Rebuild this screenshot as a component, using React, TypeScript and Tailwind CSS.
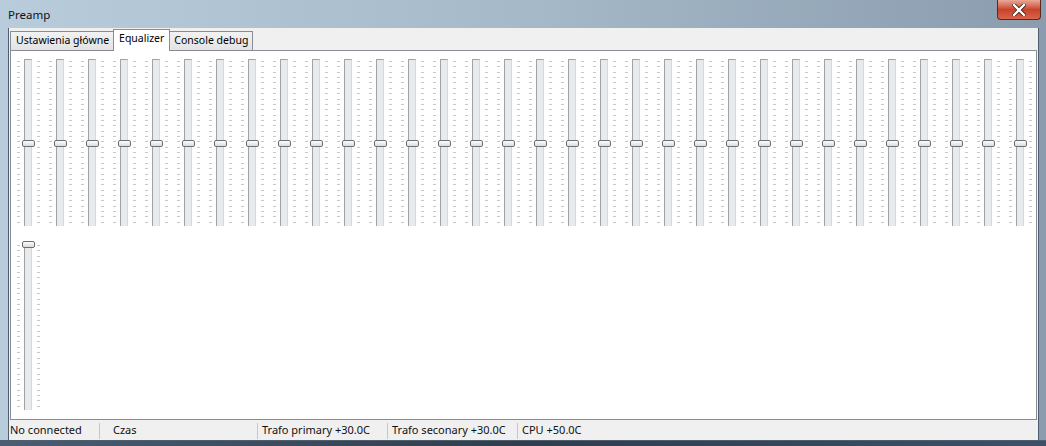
import React from 'react';

const TICKS = Array.from({ length: 31 });
const BANDS = Array.from({ length: 32 });

const TickColumn = () => (
  <div className="flex flex-col justify-between h-[162px] w-[3px] mt-[2px]">
    {TICKS.map((_, i) => (
      <div key={i} className="h-px w-[3px] bg-[#c9c9c9]" />
    ))}
  </div>
);

// one vertical trackbar, thumb position in px from the top of the track
const Slider = ({ thumbTop }: { thumbTop: number }) => (
  <div className="relative w-[32px] h-[167px] flex">
    <div className="ml-[5px]">
      <TickColumn />
    </div>
    <div className="ml-[4px] w-[8px] h-[167px] border-l border-t border-r border-[#a2a2a2] border-r-[#d8d8d8] bg-[#e8ebed]" />
    <div className="ml-[5px]">
      <TickColumn />
    </div>
    <div
      className="absolute left-[10px] w-[13px] h-[7px] rounded-[2px] border border-[#6e6e6e] bg-gradient-to-b from-[#fcfcfc] to-[#dcdcdc]"
      style={{ top: thumbTop }}
    />
  </div>
);

const StatusCell = ({ text, width, pad, last }: { text: string; width: string; pad: string; last?: boolean }) => (
  <div className={`${width} ${pad} h-[16px] flex items-center ${last ? '' : 'border-r border-[#c6c6c6]'}`}>
    <span>{text}</span>
  </div>
);

export default function App() {
  return (
    <div
      className="w-[1046px] h-[446px] flex flex-col bg-gradient-to-r from-[#b9ccdc] via-[#a6b9c9] to-[#8a9cad] text-black overflow-hidden"
      style={{ fontFamily: '"Noto Sans", "Liberation Sans", sans-serif' }}
    >
      {/* Title bar */}
      <div className="h-[28px] flex items-start justify-between">
        <div className="pl-[8px] pt-[7px] leading-[16px] text-[11.5px] text-[#111]">Preamp</div>
        <div className="mr-[5px] w-[44px] h-[20px] rounded-b-[4px] border border-t-0 border-[#5a2a22] bg-gradient-to-b from-[#e8a898] via-[#c9432c] to-[#d8644c] flex items-center justify-center">
          <svg width="14" height="12" viewBox="0 0 14 12">
            <path d="M2 1 L12 11 M12 1 L2 11" stroke="#3a1a14" strokeWidth="4" strokeLinecap="square" />
            <path d="M2 1 L12 11 M12 1 L2 11" stroke="#ffffff" strokeWidth="2.4" strokeLinecap="square" />
          </svg>
        </div>
      </div>

      {/* Client area */}
      <div className="flex-1 flex px-[8px]">
        <div className="flex-1 flex flex-col bg-[#f0f0f0] border-l border-r border-[#4f5e6e]">
          {/* Tabs */}
          <div className="h-[22px] flex items-end pl-[1px] relative z-10 text-[10.5px]">
            <div className="h-[19px] pl-[5px] pr-[4px] flex items-center border border-b-0 border-[#898c95] bg-gradient-to-b from-[#f2f2f2] to-[#e3e3e3]">
              Ustawienia główne
            </div>
            <div className="h-[22px] px-[5px] -mb-px pb-[4px] flex items-center bg-white border border-b-0 border-[#898c95] -ml-px">
              Equalizer
            </div>
            <div className="h-[19px] px-[4px] flex items-center border border-b-0 border-[#898c95] bg-gradient-to-b from-[#f2f2f2] to-[#e3e3e3] -ml-px">
              Console debug
            </div>
          </div>

          {/* Tab panel */}
          <div className="flex-1 mx-[1px] bg-white border border-[#898c95] pt-[8px] pl-px flex flex-col gap-[17px]">
            <div className="flex">
              {BANDS.map((_, i) => (
                <Slider key={i} thumbTop={81} />
              ))}
            </div>
            <div className="flex">
              <Slider thumbTop={-2} />
            </div>
          </div>

          {/* Status bar */}
          <div className="h-[20px] flex items-center text-[11px] text-[#111] pt-[1px]">
            <StatusCell text="No connected" width="w-[91px]" pad="pl-[1px]" />
            <StatusCell text="Czas" width="w-[158px]" pad="pl-[13px]" />
            <StatusCell text="Trafo primary +30.0C" width="w-[130px]" pad="pl-[4px]" />
            <StatusCell text="Trafo seconary +30.0C" width="w-[130px]" pad="pl-[4px]" />
            <StatusCell text="CPU +50.0C" width="w-[120px]" pad="pl-[4px]" last />
          </div>
        </div>
      </div>

      {/* Bottom frame edge */}
      <div className="h-[6px] border-t border-[#4f5e6e] bg-gradient-to-r from-[#4a5d72] via-[#2f3d4c] to-[#3d5066]" />
    </div>
  );
}
